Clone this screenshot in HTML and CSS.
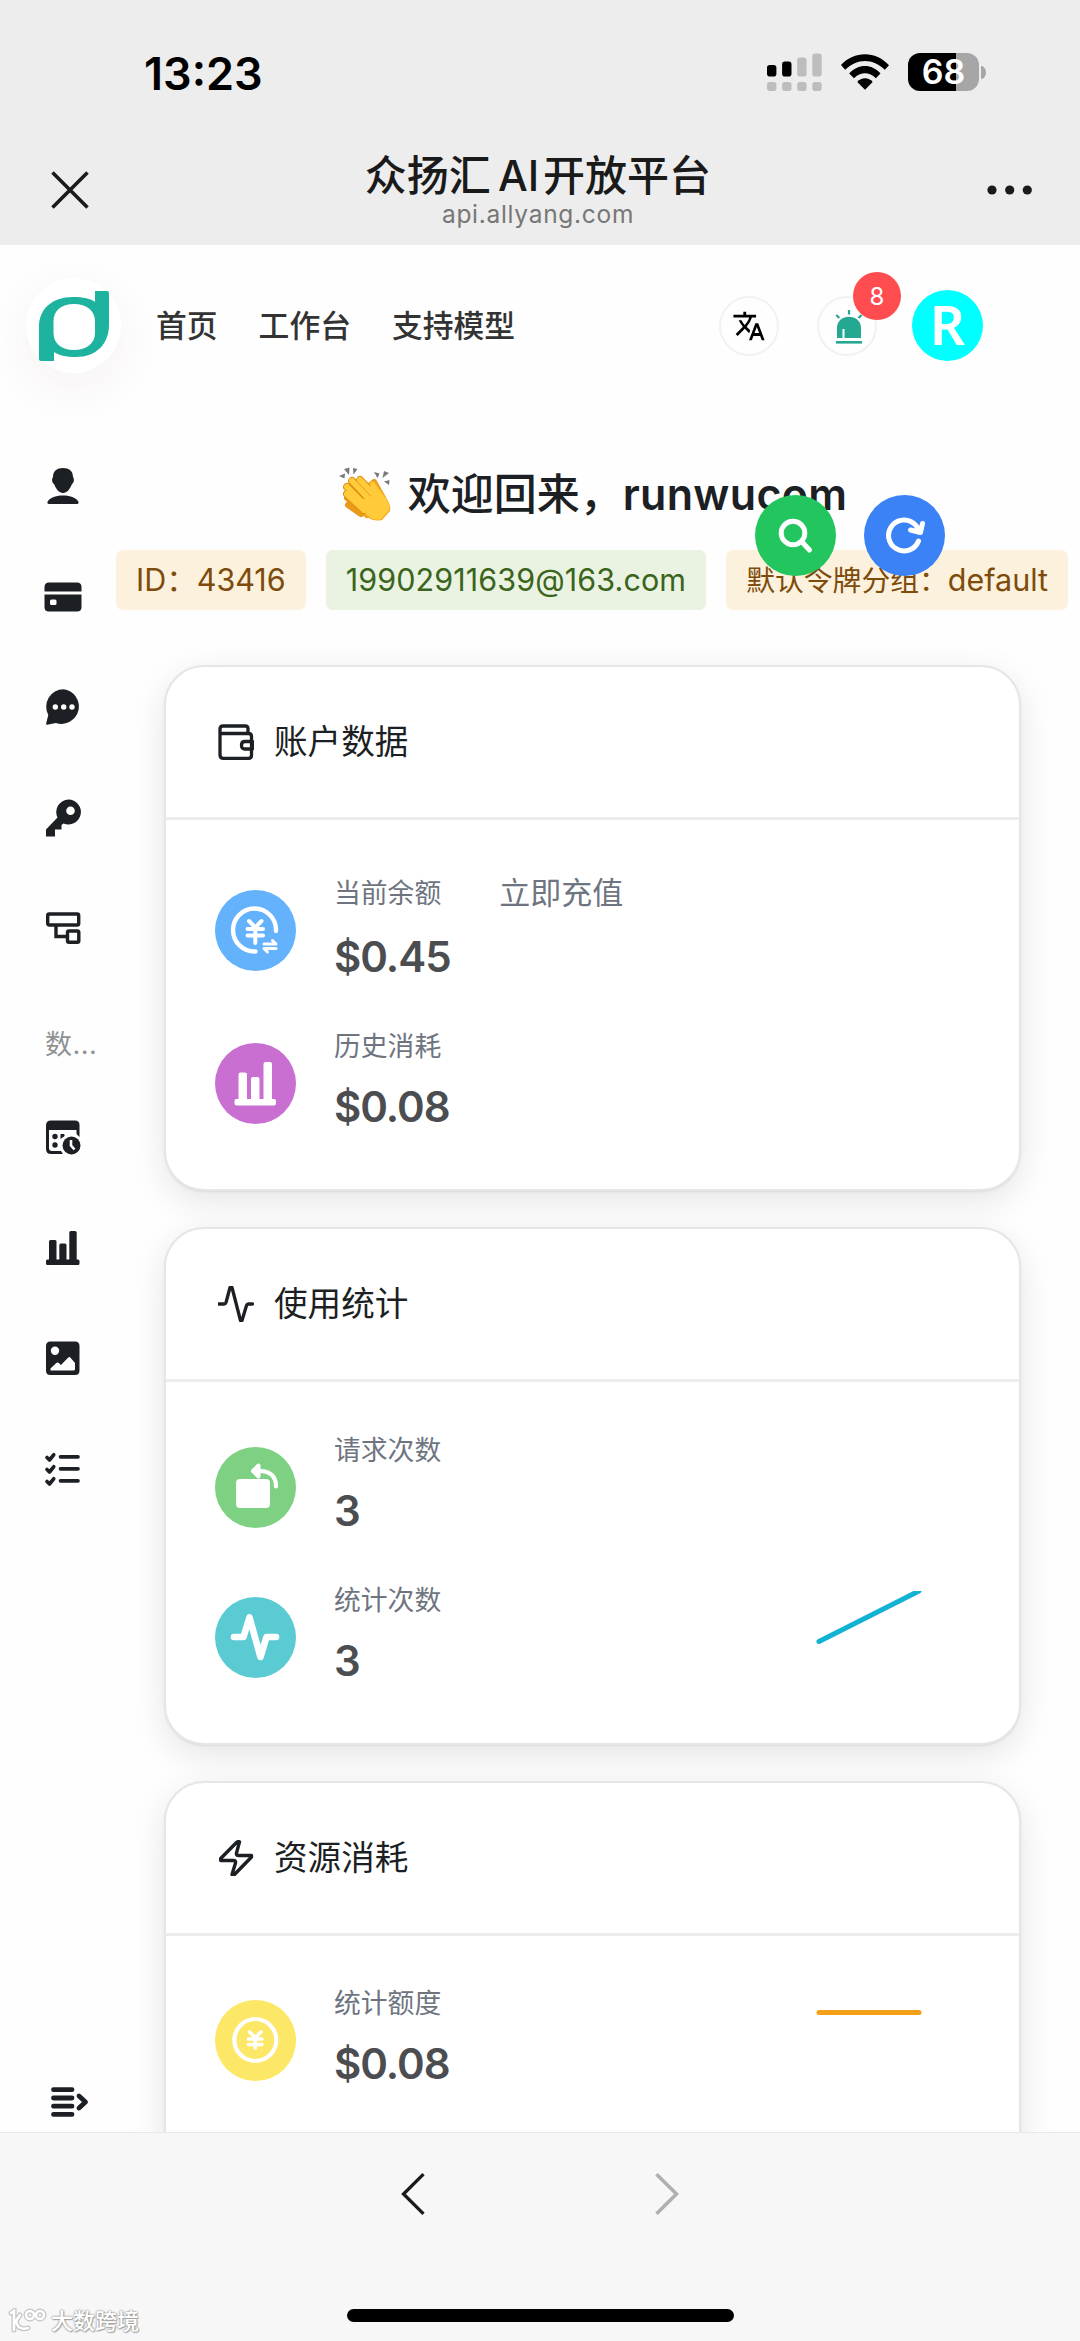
FILE: index.html
```html
<!DOCTYPE html>
<html lang="zh-CN">
<head>
<meta charset="utf-8">
<title>众扬汇 AI 开放平台</title>
<link rel="stylesheet" href="styles.css">
</head>
<body>
<div class="phone">
  <div class="status-bar">
    <span class="clock">13:23</span>
    <div class="status-icons">
      <svg class="signal" width="55" height="38" viewBox="0 0 55 38">
        <g fill="#000"><rect x="0" y="12" width="9.4" height="11.5" rx="2.8"/><rect x="15.1" y="8.5" width="9.4" height="15" rx="2.8"/></g>
        <g fill="#bdbdbd"><rect x="30.2" y="4.5" width="9.4" height="19" rx="2.8"/><rect x="45.3" y="0.5" width="9.4" height="23" rx="2.8"/><rect x="0" y="29" width="9.4" height="9" rx="2.8"/><rect x="15.1" y="29" width="9.4" height="9" rx="2.8"/><rect x="30.2" y="29" width="9.4" height="9" rx="2.8"/><rect x="45.3" y="29" width="9.4" height="9" rx="2.8"/></g>
      </svg>
      <svg class="wifi" width="48" height="36" viewBox="0 0 48 36">
        <path d="M0 11C13-3.500 35-3.500 48 11.200L43.800 15.800C32 4.200 16 4.200 4.200 15.800Z"/>
        <path d="M8.200 19.500C17 9.500 31 9.500 39.500 19.500L34.800 24.200C28.500 17.700 19.500 17.700 13 24.200Z"/>
        <path d="M16.300 28C20.500 23 27.500 23 31.700 28L24 35.800Z"/>
      </svg>
      <div class="battery"><span>68</span></div>
      <i class="battery-tip"></i>
    </div>
  </div>

  <div class="title-bar">
    <svg class="close" width="38" height="38" viewBox="0 0 38 38"><path d="M1.500 1.500 36.500 36.500M36.500 1.500 1.500 36.500" fill="none" stroke="#1a1a1a" stroke-width="3.600"/></svg>
    <div class="title">
      <div class="title-text">众扬汇<span class="latin">AI</span>开放平台</div>
      <div class="title-host">api.allyang.com</div>
    </div>
    <svg class="more" width="46" height="10" viewBox="0 0 46 10" fill="#1a1a1a"><circle cx="5" cy="5" r="4.600"/><circle cx="22.700" cy="5" r="4.600"/><circle cx="40.300" cy="5" r="4.600"/></svg>
  </div>

  <div class="page">
    <header class="site-header">
      <div class="logo">
        <svg width="70" height="70" viewBox="0 0 70 70"><path fill="#1db39e" fill-rule="evenodd" d="M56 0H68Q70 0 70 2V34C70 53 57 66 37 66C27 66 19 64 15 61V70H2Q0 70 0 68V36C0 18 13 6 34 6C44 6 52 7.500 56 11ZM35 13C22 13 14.500 20 14.500 30V42C14.500 52 22 59 35 59C48 59 56 52 56 42V30C56 20 48 13 35 13Z"/></svg>
      </div>
      <nav class="top-nav"><a>首页</a><a>工作台</a><a>支持模型</a></nav>
      <div class="tools">
        <div class="round">
          <svg width="34" height="34" viewBox="0 0 24 24"><path d="m12.870 15.070-2.540-2.510.03-.03A17.500 17.500 0 0 0 14.070 6H17V4h-7V2H8v2H1v1.990h11.170C11.500 7.920 10.440 9.750 9 11.350 8.070 10.320 7.300 9.190 6.690 8h-2c.73 1.630 1.730 3.170 2.980 4.560l-5.090 5.020L4 19l5-5 3.110 3.110zM18.500 10h-2L12 22h2l1.120-3h4.750L21 22h2zm-2.620 7 1.620-4.330L19.120 17z"/></svg>
        </div>
        <div class="round alarm">
          <svg width="28" height="34" viewBox="0 0 28 34"><g fill="#25a892"><path d="M2 28V18C2 3 26 3 26 18V28H9.500V19H7.500V28Z"/><rect x="1" y="31" width="26" height="2.600"/></g><path d="M14 4.500V0M4.300 8 1.300 5M23.500 8 26.500 5" fill="none" stroke="#25a892" stroke-width="2.200"/></svg>
          <span class="badge">8</span>
        </div>
        <div class="avatar">R</div>
      </div>
    </header>

    <div class="columns">
      <aside class="sidebar">
        <div class="side-item"><svg width="38" height="38" viewBox="0 0 38 38"><path d="M19 1C25 1 29 4 29 10C30.500 12 30 16 28 17C26 22 23 26 19 26S12 22 10 17C8 16 7.500 12 9 10C9 4 13 1 19 1ZM5 37C3.200 37 3 35.500 4 34C7 30 13 28.500 19 28.500S31 30 34 34C35 35.500 34.800 37 33 37Z"/></svg></div>
        <div class="side-item"><svg width="38" height="38" viewBox="0 0 38 38"><path fill-rule="evenodd" d="M5 4.500H33Q37.500 4.500 37.500 9V13.500H.5V9Q.5 4.500 5 4.500ZM.5 16.500H37.500V29Q37.500 33.500 33 33.500H5Q.5 33.500 .5 29ZM7.500 21.500Q6 21.500 6 23V25.500Q6 27 7.500 27H11Q12.500 27 12.500 25.500V23Q12.500 21.500 11 21.500Z"/></svg></div>
        <div class="side-item"><svg width="38" height="38" viewBox="0 0 38 38"><path d="M19.500 1.200A17.400 17.400 0 1 1 12 35L3.200 36.800Q1.800 36.800 2.200 35.200L4.300 27A17.500 17.500 0 0 1 19.500 1.200Z"/><g fill="#fff"><circle cx="11.300" cy="19" r="2.700"/><circle cx="19.700" cy="19" r="2.700"/><circle cx="28" cy="19" r="2.700"/></g></svg></div>
        <div class="side-item"><svg width="38" height="38" viewBox="0 0 38 38"><path fill-rule="evenodd" d="M24.500 .5A12.500 12.500 0 1 1 19.500 24.500L17.500 26V30.500H11V37.500H2V30.500L13.500 18.500A12.500 12.500 0 0 1 24.500 .5ZM26.500 7.500A4.300 4.300 0 1 0 26.510 16.100A4.300 4.300 0 0 0 26.500 7.500Z"/></svg></div>
        <div class="side-item"><svg width="38" height="38" viewBox="0 0 38 38" fill="none" stroke="#1c1f23" stroke-width="3.400"><rect x="3.700" y="5" width="31" height="11" rx="1.500"/><path d="M12 16V27.500H23.500"/><rect x="23.500" y="22" width="11.300" height="11.300" rx="1.500"/></svg></div>
        <div class="side-group">数...</div>
        <div class="side-item"><svg width="38" height="38" viewBox="0 0 38 38"><path fill-rule="evenodd" d="M7 2.500H31Q35.500 2.500 35.500 7V19Q32.500 16 32.500 15.500V12H5V30Q5 33 8 33H17L19 36H7Q2 36 2 31V7.500Q2 2.500 7 2.500Z"/><circle cx="11" cy="18.500" r="2.700"/><circle cx="11" cy="27" r="2.700"/><path d="M16.500 16H20Q21.500 17 20 18.500L16.500 21Z"/><circle cx="27.500" cy="27.500" r="9"/><path d="M27 22V27.500L30.500 31.500" fill="none" stroke="#fff" stroke-width="2.600"/></svg></div>
        <div class="side-item"><svg width="38" height="38" viewBox="0 0 38 38"><path d="M3.500 30.500H5V12.500Q5 11 6.500 11H11Q12.500 11 12.500 12.500V30.500H15.300V16Q15.300 14.500 16.800 14.500H21Q22.500 14.500 22.500 16V30.500H25.300V3.500Q25.300 2 26.800 2H31Q32.700 2 32.700 3.500V30.500H34Q35.500 30.500 35.500 32V34.500Q35.500 36 34 36H3.500Q2 36 2 34.500V32Q2 30.500 3.500 30.500Z"/></svg></div>
        <div class="side-item"><svg width="38" height="38" viewBox="0 0 38 38"><path fill-rule="evenodd" d="M6.500 2.500H31Q35.500 2.500 35.500 7V31.500Q35.500 36 31 36H6.500Q2 36 2 31.500V7Q2 2.500 6.500 2.500ZM11 7.500A4.200 4.200 0 1 0 11.010 15.900A4.200 4.200 0 0 0 11 7.500ZM6.500 31.500H29.500Q31 31.500 31 30V24L26.500 18.700Q25.200 17.500 24 18.700L17 26L14.500 23.700Q13.500 23 12.300 24L6.500 29.500Z"/></svg></div>
        <div class="side-item"><svg width="38" height="38" viewBox="0 0 38 38" fill="none" stroke="#1c1f23" stroke-width="3.700" stroke-linecap="round" stroke-linejoin="round"><path d="M16.500 6.800H34M16.500 18.800H34M16.500 30.800H34"/><path d="M3 7.500 5.500 10 9.700 4.800M3 19.500 5.500 22 9.700 16.800M3 31.500 5.500 34 9.700 28.800"/></svg></div>
        <svg class="expand" width="38" height="30" viewBox="0 0 38 30" fill="none" stroke="#1c1f23" stroke-linecap="round" stroke-linejoin="round"><path stroke-width="4.800" d="M2.500 2.700H21M2.500 11H21M2.500 19.200H21M2.500 27.400H21"/><path stroke-width="4.800" d="M28 9 34.500 15 28 21"/></svg>
      </aside>

      <main class="main">
        <h1 class="welcome">
          <svg width="52" height="54" viewBox="0 0 52 54">
            <g fill="#757980"><path d="M0 9 6 6.500 5.500 11.500ZM5 2 10.500 .5 10 8ZM14 1 18.500 2 14.500 7.500ZM35 5 40.500 6.500 38.500 11ZM43.500 11 45 4 50 6ZM45 14.500 50.500 13 50 18Z"/></g>
            <g fill="none" stroke-linecap="round" stroke="#e99a19" stroke-width="6"><path d="M35 15 44 31M9 38 22 47M8 31 28 48"/></g>
            <path fill="#f5ae20" d="M30 15Q34 12 37 16L48 32Q52 38 51 44L43 53Q35 55 28 50L12 36Z"/>
            <g fill="none" stroke-linecap="round" stroke="#dd8c12" stroke-width="7.800"><path d="M8 27 25 43M8 20 28 40M13 14 33 35M21 13 39 32"/></g>
            <g fill="none" stroke-linecap="round" stroke="#ffcb3b" stroke-width="6"><path d="M8 27 25 43M8 20 28 40M13 14 33 35M21 13 39 32"/></g>
            <path fill="#ffcb3b" d="M24 32 37 28 32 21Q30 14 35 15Q39 22 45 29Q51 36 50 43L42 52Q34 54 28 48L20 39Z"/>
          </svg>
          <span>欢迎回来，<b>runwucom</b></span>
        </h1>
        <div class="tags">
          <span class="tag amber">ID：43416</span>
          <span class="tag green">19902911639@163.com</span>
          <span class="tag amber"><span class="tag-key">默认令牌分组：</span>default</span>
        </div>

        <div class="cards">
          <section class="card account">
            <div class="card-head">
              <svg width="36" height="36" viewBox="0 0 36 36" fill="none" stroke="#1c1f23" stroke-width="3.300" stroke-linejoin="round"><path d="M30 9V4.500Q30 2 27.500 2H5Q2 2 2 5V31Q2 34.300 5.500 34.300H30.500Q33.500 34.300 33.500 31.500V12.500Q33.500 9.500 30.500 9.500H2"/><path d="M34.500 17.500H27Q23.500 17.500 23.500 21.300T27 25H34.500Z"/></svg>
              <h2>账户数据</h2>
            </div>
            <div class="card-body">
              <div class="stat">
                <div class="dot blue"><svg width="80" height="80" viewBox="0 0 80 80" fill="none" stroke="#fff" stroke-linecap="round" stroke-linejoin="round"><path stroke-width="4.400" d="M61 41A21.500 21.500 0 1 0 40.500 61.500"/><path stroke-width="4" d="M34 31 40.300 37.500 46.500 31M32.500 39H48M32.500 45.500H48M40.300 38V53"/><path stroke-width="3" d="M49 54H61L57.500 50.500M61 58.500H49L52.500 62"/></svg></div>
                <div class="stat-text"><div class="label tall">当前余额<a class="recharge">立即充值</a></div><div class="value">$0.45</div></div>
              </div>
              <div class="stat">
                <div class="dot purple"><svg width="80" height="80" viewBox="0 0 80 80" fill="#fff"><path d="M21 56H23.500V31.500Q23.500 29.500 25.500 29.500H30Q32 29.500 32 31.500V56H36V36Q36 34 38 34H42.500Q44.500 34 44.500 36V56H48.500V21Q48.500 19 50.500 19H55Q57 19 57 21V56H59Q61 56 61 58V60.500Q61 62.500 59 62.500H21.500Q19.500 62.500 19.500 60.500V58Q19.500 56 21 56Z"/></svg></div>
                <div class="stat-text"><div class="label">历史消耗</div><div class="value">$0.08</div></div>
              </div>
            </div>
          </section>

          <section class="card usage">
            <div class="card-head">
              <svg width="36" height="36" viewBox="0 0 36 36" fill="none" stroke="#1c1f23" stroke-width="3.300" stroke-linecap="round" stroke-linejoin="round"><path d="M.5 18H6Q7.500 18 8 16.500L12 1.500H14L22.500 34.500H24L28.500 19.500Q29 18 30.500 18H34.500"/></svg>
              <h2>使用统计</h2>
            </div>
            <div class="card-body">
              <div class="stat">
                <div class="dot lime"><svg width="80" height="80" viewBox="0 0 80 80"><rect x="21" y="32" width="34" height="29" rx="4" fill="#fff"/><path d="M39 24H44Q61 24 61 39.500" fill="none" stroke="#fff" stroke-width="4.200" stroke-linecap="round"/><path d="M43.500 18.500 38 24 43.500 29.500Z" fill="#fff" stroke="#fff" stroke-width="4" stroke-linejoin="round"/></svg></div>
                <div class="stat-text"><div class="label">请求次数</div><div class="value">3</div></div>
              </div>
              <div class="stat">
                <div class="dot cyan"><svg width="80" height="80" viewBox="0 0 80 80" fill="none" stroke="#fff" stroke-width="6.600" stroke-linecap="round" stroke-linejoin="round"><path d="M19 40H28.500L34.500 20.500 45.500 60 51.500 40H61"/></svg></div>
                <div class="stat-text"><div class="label">统计次数</div><div class="value">3</div></div>
                <svg class="trend" width="106" height="90" viewBox="0 0 106 90"><path d="M3 50.500 103 0" fill="none" stroke="#12b2d4" stroke-width="5" stroke-linecap="round"/></svg>
              </div>
            </div>
          </section>

          <section class="card spend">
            <div class="card-head">
              <svg width="36" height="36" viewBox="0 0 36 36" fill="none" stroke="#1c1f23" stroke-width="3.400" stroke-linejoin="round"><path d="M18.500 2.500 2.700 18.500V20.500H15.500Q18 20.500 17.500 23L14 34.500H16.500L33.500 17V15.500H20.500Q18 15.500 18.500 13L21.500 1.800H19.500Z"/></svg>
              <h2>资源消耗</h2>
            </div>
            <div class="card-body">
              <div class="stat">
                <div class="dot yellow"><svg width="80" height="80" viewBox="0 0 80 80" fill="none" stroke="#fff" stroke-linecap="round"><circle cx="40.300" cy="40" r="21" stroke-width="4.200"/><path stroke-width="3.600" d="M34.500 32 40.300 37.500 46 32M33.500 39H47M33.500 44.500H47M40.300 38V48"/></svg></div>
                <div class="stat-text"><div class="label">统计额度</div><div class="value">$0.08</div></div>
                <svg class="trend" width="106" height="90" viewBox="0 0 106 90"><path d="M3 18.500H103" fill="none" stroke="#f4a118" stroke-width="5" stroke-linecap="round"/></svg>
              </div>
            </div>
          </section>
        </div>
      </main>
    </div>

    <div class="floating">
      <div class="fab search"><svg width="36" height="36" viewBox="0 0 36 36" fill="none" stroke="#fff" stroke-width="5" stroke-linecap="round"><circle cx="15" cy="15" r="11.800"/><path d="M24 24 31.500 32"/></svg></div>
      <div class="fab reload"><svg width="40" height="38" viewBox="0 0 40 38" fill="none" stroke="#fff" stroke-width="5" stroke-linecap="round" stroke-linejoin="round"><path d="M33.500 24A15.500 15.500 0 1 1 31 8.500L35 14M37.500 6.500 35.500 15.500 25.500 13"/></svg></div>
    </div>
  </div>

  <div class="bottom-bar">
    <div class="pager">
      <svg width="24" height="42" viewBox="0 0 24 42" fill="none" stroke="#1a1a1a" stroke-width="3.300"><path d="M22.500 1.200 2.500 21 22.500 40.800"/></svg>
      <svg width="24" height="42" viewBox="0 0 24 42" fill="none" stroke="#b0b0b0" stroke-width="3.600"><path d="M1.500 1.200 21.500 21 1.500 40.800"/></svg>
    </div>
    <div class="home-indicator"></div>
  </div>

  <div class="watermark">
    <svg width="39" height="26" viewBox="0 0 39 26" fill="none" stroke-linecap="round"><g stroke="#c4c4c4" stroke-width="5"><path d="M3 5 6 3V22M12 7 8 13Q10 23 20 20"/><circle cx="22" cy="7" r="4"/><circle cx="32" cy="7" r="4"/></g><g stroke="#fff" stroke-width="2.600"><path d="M3 5 6 3V22M12 7 8 13Q10 23 20 20"/><circle cx="22" cy="7" r="4"/><circle cx="32" cy="7" r="4"/></g></svg>
    <span>大数跨境</span>
  </div>
</div>
</body>
</html>
```
FILE: styles.css
```css
* { box-sizing: border-box; margin: 0; padding: 0; }
body { background: #fefefe; font-family: Inter, "Noto Sans CJK SC", sans-serif; color: #1c1f23; }
svg { display: block; flex: none; }
.phone { position: relative; width: 1080px; height: 2341px; display: flex; flex-direction: column; overflow: hidden; }

.status-bar { flex: none; height: 144px; padding: 0 94px 0 144px; background: #ededed; display: flex; align-items: center; justify-content: space-between; }
.clock { font-size: 45px; line-height: 54px; font-weight: 600; color: #000; padding-top: 3px; }
.status-icons { display: flex; align-items: center; }
.wifi { margin-left: 19px; }
.battery { margin-left: 19px; width: 71px; height: 38px; border-radius: 12px; background: linear-gradient(to right, #000 68%, #a6a6a6 68%); color: #fff; font-size: 34px; font-weight: 600; line-height: 38px; text-align: center; }
.battery-tip { margin-left: 2px; width: 5px; height: 13px; border-radius: 0 5px 5px 0 / 0 7px 7px 0; background: #a6a6a6; }

.title-bar { flex: none; height: 101px; padding: 0 47px 0 51px; background: #ededed; display: flex; align-items: flex-start; justify-content: space-between; }
.close { margin-top: 27px; }
.more { margin-top: 41px; }
.title { width: 400px; text-align: center; }
.title-text { padding-top: 2px; font-size: 42px; line-height: 60px; font-weight: 500; color: #1a1a1a; white-space: nowrap; }
.latin { margin: 0 4px 0 7px; }
.title-host { font-size: 24.500px; line-height: 30px; color: #777; font-weight: 400; margin-top: -7px; letter-spacing: .7px; }

.page { position: relative; flex: 1; min-height: 0; overflow: hidden; display: flex; flex-direction: column; background: #fefefe; }
.site-header { flex: none; height: 161px; padding: 0 97px 0 26px; display: flex; align-items: center; }
.logo { width: 95px; height: 95px; border-radius: 50%; background: #fff; display: flex; align-items: center; justify-content: center; box-shadow: 0 14px 50px rgba(120, 30, 30, .06); }
.top-nav { margin-left: 35px; display: flex; gap: 41px; font-size: 30.800px; line-height: 46px; font-weight: 500; color: #333; }
.tools { margin-left: auto; display: flex; align-items: center; }
.round { position: relative; width: 60px; height: 60px; border: 2px solid #f1f2f3; border-radius: 50%; display: flex; align-items: center; justify-content: center; }
.alarm { margin: 0 35px 0 38px; padding: 3px 0 0 3px; }
.badge { position: absolute; left: 34px; top: -26px; width: 48px; height: 48px; border-radius: 50%; background: #ff4d4f; color: #fff; font-size: 24px; line-height: 49px; text-align: center; }
.avatar { width: 71px; height: 71px; border-radius: 50%; background: #00ffff; color: #fff; font-family: "Noto Sans", Inter, sans-serif; font-size: 55px; font-weight: 600; line-height: 67px; text-align: center; }

.columns { flex: 1; min-height: 0; display: flex; }
.sidebar { flex: none; width: 116px; padding: 25px 0 15px 0; display: flex; flex-direction: column; }
.side-item { flex: none; width: 126px; height: 110.5px; display: flex; align-items: center; justify-content: center; fill: #1c1f23; }
.side-group { flex: none; height: 98.500px; padding: 41px 0 0 45px; font-size: 27px; line-height: 40px; color: #909193; white-space: nowrap; letter-spacing: .5px; }
.expand { margin: auto 0 0 51px; }

.main { width: 954px; }
.welcome { height: 144px; padding-top: 61px; display: flex; align-items: flex-start; justify-content: center; gap: 17px; font-size: 43px; line-height: 54px; font-weight: 500; }
.welcome b { font-weight: 600; letter-spacing: .3px; }
.tags { display: flex; gap: 20px; }
.tag { flex: none; height: 60px; border-radius: 7px; padding: 0 20px; font-size: 30.500px; line-height: 60px; white-space: nowrap; }
.tag-key { font-size: 28.800px; }
.amber { background: #fcf1dc; color: #7d4c0c; }
.green { background: #eaf3e2; color: #3b641c; letter-spacing: .1px; }

.cards { margin: 55px 0 0 48px; width: 857px; display: flex; flex-direction: column; gap: 36px; }
.card { background: #fff; border: 2px solid #e6e6e7; border-radius: 40px; box-shadow: 0 10px 34px rgba(0, 0, 0, .1), 0 1px 2px rgba(0, 0, 0, .08); }
.card-head { height: 153px; padding-left: 52px; border-bottom: 3px solid #ededee; display: flex; align-items: center; gap: 20px; }
.card-head h2 { font-size: 33.600px; line-height: 48px; font-weight: 400; }
.card-body { padding: 50px 97px 52px 49px; display: flex; flex-direction: column; gap: 39px; }
.usage .card-body { padding-top: 48px; }
.spend .card-body { padding-top: 47px; padding-bottom: 202px; }
.stat { display: flex; align-items: center; }
.dot { width: 81px; height: 81px; margin-top: 3px; border-radius: 50%; }
.blue { background: #64b1fc; }
.purple { background: #c86fd1; }
.lime { background: #7ed183; }
.cyan { background: #5acbd3; }
.yellow { background: #fce766; }
.stat-text { margin-left: 38px; }
.label { height: 40px; line-height: 40px; font-size: 26.800px; color: #6e7480; display: flex; align-items: center; }
.label.tall { height: 46px; }
.recharge { margin-left: 58px; font-size: 31px; }
.value { margin-top: 11px; font-size: 42px; line-height: 60px; font-weight: 600; color: #4b4d50; letter-spacing: -1px; }
.trend { margin-left: auto; }

.floating { position: absolute; left: 755px; top: 250px; display: flex; gap: 28px; }
.fab { width: 81px; height: 81px; border-radius: 50%; display: flex; align-items: center; justify-content: center; }
.search { background: #22c55e; }
.reload { background: #3b82f6; }

.bottom-bar { flex: none; height: 209px; background: #f7f7f7; border-top: 1px solid #e8e8e8; display: flex; flex-direction: column; align-items: center; justify-content: space-between; padding: 40px 0 19px; }
.pager { width: 278px; display: flex; justify-content: space-between; }
.home-indicator { width: 387px; height: 13px; border-radius: 7px; background: #000; }

.watermark { position: absolute; left: 8px; top: 2308px; display: flex; align-items: center; gap: 4px; font-size: 22px; line-height: 26px; font-weight: 500; color: #fff; text-shadow: 0 0 2px #999, 0 0 2px #999, 1px 1px 1px #aaa; }
```
